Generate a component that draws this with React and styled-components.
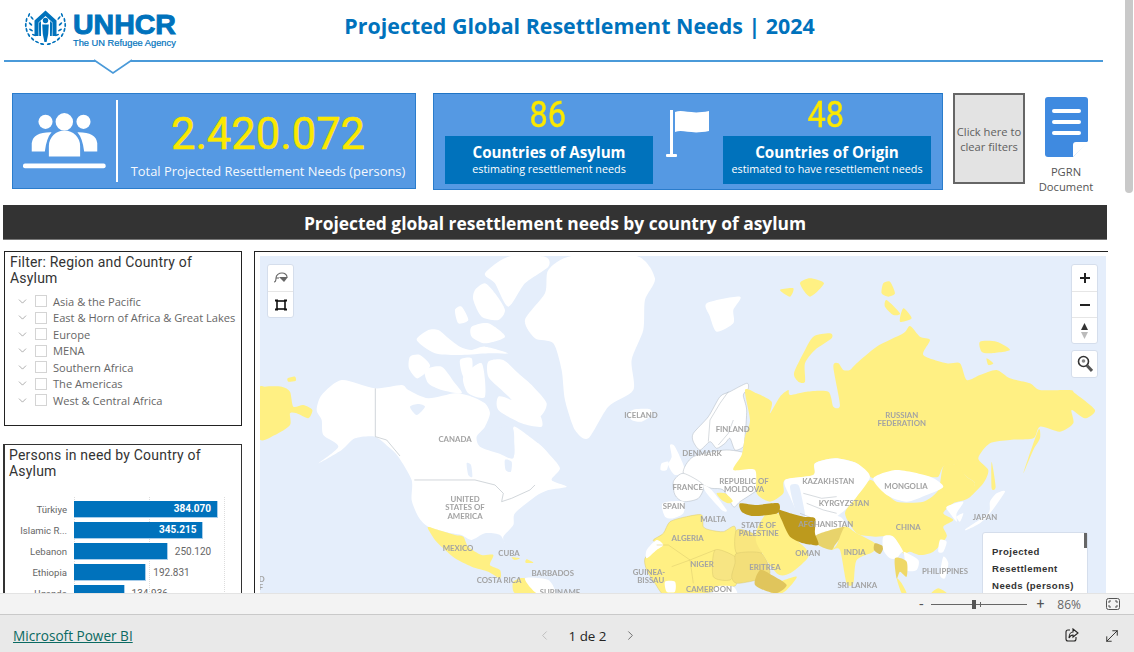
import React from 'react';
import styled, { createGlobalStyle } from 'styled-components';
import { ChevronDown, ChevronLeft, ChevronRight, MoveDiagonal } from 'lucide-react';

const GlobalStyle = createGlobalStyle`
  html, body { margin: 0; padding: 0; height: 100%; overflow: hidden; background: #fff; }
  * { box-sizing: border-box; }
`;

const regions = [
  'Asia & the Pacific',
  'East & Horn of Africa & Great Lakes',
  'Europe',
  'MENA',
  'Southern Africa',
  'The Americas',
  'West & Central Africa',
];

const bars = [
  { name: 'Türkiye', value: 384070, label: '384.070' },
  { name: 'Islamic R...', value: 345215, label: '345.215' },
  { name: 'Lebanon', value: 250120, label: '250.120' },
  { name: 'Ethiopia', value: 192831, label: '192.831' },
  { name: 'Uganda', value: 134936, label: '134.936' },
];

const mapLabels = [
  ['ICELAND', 641, 418], ['CANADA', 455, 441.5], ['UNITED', 465, 501.5], ['STATES OF', 465, 510], ['AMERICA', 465, 518.5],
  ['MEXICO', 458, 550.5], ['CUBA', 509, 556], ['BARBADOS', 552.7, 576], ['COSTA RICA', 499, 583], ['GUINEA-', 649, 574.5],
  ['BISSAU', 650.7, 582.5], ['SURINAME', 560, 595], ['ALGERIA', 687.7, 540.5], ['SPAIN', 674, 508.5], ['FRANCE', 687.7, 490],
  ['MALTA', 713, 521.5], ['NIGER', 702, 567], ['CAMEROON', 709, 592], ['ERITREA', 765, 569.5], ['STATE OF', 758.7, 527.5],
  ['PALESTINE', 758.7, 535.5], ['OMAN', 807.7, 556], ['INDIA', 854.7, 554.5], ['SRI LANKA', 857.3, 588], ['CHINA', 908.3, 529.5],
  ['JAPAN', 985, 519.5], ['PHILIPPINES', 945, 574], ['KAZAKHSTAN', 828.3, 484], ['MONGOLIA', 906, 489], ['KYRGYZSTAN', 844, 506],
  ['AFGHANISTAN', 825.7, 527], ['RUSSIAN', 901.7, 418], ['FEDERATION', 901.7, 426], ['FINLAND', 732.7, 432], ['DENMARK', 702, 456],
  ['REPUBLIC OF', 744, 484], ['MOLDOVA', 744, 492], ['D', 261.7, 582], ['F', 261, 590],
];

const Page = styled.div`
  width: 1134px;
  height: 652px;
  display: flex;
  flex-direction: column;
  overflow: hidden;
  background: #fff;
  font-family: "Roboto", "Liberation Sans", sans-serif;
`;

const Viewport = styled.div`
  position: relative;
  height: 593px;
  overflow: hidden;
  flex: none;
`;

const ScrollThumb = styled.div`
  position: absolute;
  top: 0;
  right: 1px;
  width: 8px;
  height: 193px;
  background: #c9c9c9;
  border-radius: 0 0 4px 4px;
`;

const Header = styled.header`
  position: relative;
  width: 1103px;
  height: 62px;
  margin-left: 4px;
  display: flex;
  align-items: flex-start;
  border-bottom: 2px solid #4a9ad9;
  width: 1099px;
`;

const Notch = styled.svg`
  position: absolute;
  left: 88px;
  top: 58px;
`;

const Logo = styled.div`
  flex: 0 0 174px;
  padding: 10px 0 0 20px;
  display: flex;
  gap: 6px;
  color: #0072bc;
`;

const LogoWords = styled.div`
  display: flex;
  flex-direction: column;
  font-family: "Liberation Sans", sans-serif;
`;

const LogoName = styled.div`
  font-size: 28.5px;
  font-weight: 700;
  line-height: 28px;
  height: 28px;
  -webkit-text-stroke: 1px #0072bc;
`;

const LogoTag = styled.div`
  font-size: 9.3px;
  line-height: 9px;
  margin-top: 1px;
  white-space: nowrap;
  -webkit-text-stroke: 0.2px #0072bc;
`;

const Title = styled.h1`
  flex: 0 0 803px;
  margin: 11px 0 0;
  text-align: center;
  color: #0072bc;
  font-family: "Open Sans", sans-serif;
  font-size: 21.4px;
  line-height: 30px;
  font-weight: 700;
  white-space: nowrap;
`;

const KpiRow = styled.section`
  display: flex;
  align-items: flex-start;
  padding-left: 12px;
  margin-top: 31px;
  height: 112px;
`;

const TotalCard = styled.div`
  flex: 0 0 404px;
  height: 96px;
  background: #5599e3;
  border: 1px solid #2a7ccc;
  display: flex;
  align-items: center;
  padding-left: 10px;
`;

const TotalIcon = styled.svg`
  flex: none;
`;

const TotalBody = styled.div`
  flex: 1;
  height: 82px;
  margin-left: 9px;
  border-left: 2px solid #fff;
  padding: 0 8px 0 11px;
  display: flex;
  flex-direction: column;
  align-items: center;
`;

const BigNumber = styled.div`
  font-size: 43.5px;
  line-height: 50px;
  margin-top: 10px;
  color: #fbe800;
  font-weight: 400;
  -webkit-text-stroke: 0.5px #fbe800;
`;

const TotalLabel = styled.div`
  font-family: "Open Sans", sans-serif;
  font-size: 12.9px;
  line-height: 18px;
  margin-top: 2px;
  color: #f4f8fd;
  white-space: nowrap;
`;

const CountCard = styled.div`
  flex: 0 0 510px;
  height: 97px;
  margin-left: 17px;
  background: #5599e3;
  border: 1px solid #2a7ccc;
  border-top-color: #1f74c5;
  display: grid;
  grid-template-columns: 208px 70px 208px;
  padding: 0 11px;
`;

const CountColumn = styled.div`
  display: flex;
  flex-direction: column;
  align-items: center;
`;

const CountNumber = styled.div`
  font-size: 37px;
  line-height: 42px;
  margin-right: 3px;
  color: #fbe800;
  transform: scaleX(0.88);
  -webkit-text-stroke: 0.4px #fbe800;
`;

const CountBox = styled.div`
  width: 100%;
  height: 48px;
  background: #0072bc;
  color: #fff;
  text-align: center;
  font-family: "Open Sans", sans-serif;
  padding-top: 7px;
`;

const CountTitle = styled.div`
  font-size: 15.2px;
  line-height: 18px;
  font-weight: 700;
`;

const CountSub = styled.div`
  font-size: 10.8px;
  line-height: 15px;
  white-space: nowrap;
`;

const FlagCell = styled.div`
  display: flex;
  justify-content: center;
  padding-top: 16px;
`;

const ClearButton = styled.button`
  flex: 0 0 72px;
  height: 91px;
  margin-left: 10px;
  padding: 0;
  background: #e3e3e3;
  border: 2px solid #666;
  color: #606060;
  font-family: "Open Sans", sans-serif;
  font-size: 11.2px;
  line-height: 15px;
`;

const DocLink = styled.div`
  flex: 0 0 60px;
  margin-left: 11px;
  display: flex;
  flex-direction: column;
  align-items: center;
  padding-top: 4px;
  color: #555;
  font-family: "Open Sans", sans-serif;
  font-size: 11.2px;
  line-height: 15px;
  text-align: center;
`;

const DocLabel = styled.div`
  margin-top: 7px;
`;

const Band = styled.h2`
  width: 1104px;
  height: 35px;
  margin: 0 0 0 3px;
  background: #333;
  border-bottom: 1px solid #777;
  color: #fff;
  text-align: center;
  font-family: "Open Sans", sans-serif;
  font-size: 17.4px;
  line-height: 36px;
  font-weight: 700;
`;

const Lower = styled.section`
  display: flex;
  align-items: flex-start;
  margin-top: 11px;
  padding-left: 3px;
`;

const SideColumn = styled.div`
  flex: 0 0 239px;
  min-width: 0;
  display: flex;
  flex-direction: column;
  gap: 18px;
`;

const FilterCard = styled.div`
  margin-left: 1px;
  height: 175px;
  border: 1px solid #222;
  padding: 2px 5px;
`;

const CardTitle = styled.div`
  color: #333;
  font-size: 14px;
  line-height: 16px;
  letter-spacing: 0.2px;
`;

const TreeList = styled.ul`
  list-style: none;
  margin: 7px 0 0;
  padding: 0 0 0 6px;
`;

const TreeRow = styled.li`
  display: flex;
  align-items: center;
  height: 16.5px;
  color: #666;
  font-family: "Open Sans", sans-serif;
  font-size: 11.1px;
  white-space: nowrap;
`;

const Box = styled.span`
  flex: none;
  width: 12px;
  height: 12px;
  margin: 0 6px 0 6px;
  border: 1px solid #d4d4d4;
`;

const ChartCard = styled.div`
  height: 200px;
  border: 1px solid #333;
  border-left-width: 2px;
  padding: 2px 4px;
`;

const ChartArea = styled.div`
  position: relative;
  margin-top: 18px;
  padding-top: 4px;
  display: flex;
  flex-direction: column;
  gap: 4px;
`;

const GridLine = styled.i`
  position: absolute;
  top: 0;
  bottom: 0;
  left: ${p => p.$left}px;
  border-left: 1px dotted #ddd;
`;

const BarRow = styled.div`
  position: relative;
  display: flex;
  align-items: center;
  height: 17px;
`;

const BarName = styled.div`
  flex: 0 0 58px;
  margin-right: 7px;
  text-align: right;
  color: #666;
  font-size: 9.6px;
  white-space: nowrap;
`;

const Bar = styled.div`
  height: 17px;
  background: #0072bc;
  border: 1px solid #a8cdea;
  border-width: 0 1px 1px 0;
  text-align: right;
  padding-right: 6px;
  color: #fff;
  font-size: 10px;
  line-height: 16px;
  font-weight: 700;
`;

const BarValue = styled.span`
  margin-left: 7px;
  color: #666;
  font-size: 10px;
`;

const MapFrame = styled.div`
  position: relative;
  flex: 0 0 853px;
  margin-left: 12px;
  height: 345px;
  padding: 4px 2px 0 5px;
  border-top: 1px solid #222;
  border-left: 1px solid #222;
`;

const MapSvg = styled.svg`
  display: block;
  width: 846px;
  height: 340px;
  background: #e5eefb;
  filter: blur(0.3px);
`;

const MapText = styled.text`
  font-family: "Lato", sans-serif;
  font-size: 7.8px;
  font-weight: 700;
  fill: #a3a3a3;
  text-anchor: middle;
`;

const Controls = styled.div`
  position: absolute;
  top: ${p => p.$top}px;
  ${p => (p.$right ? `right: ${p.$right}px;` : `left: ${p.$left}px;`)}
  width: 27px;
  background: #fff;
  border: 1px solid #d5deec;
  border-radius: 3px;
  display: flex;
  flex-direction: column;
`;

const ControlButton = styled.div`
  height: 26px;
  display: flex;
  align-items: center;
  justify-content: center;
  & + & { border-top: 1px solid #e6e6e6; }
`;

const Legend = styled.div`
  position: absolute;
  left: 727px;
  top: 280px;
  width: 106px;
  height: 70px;
  background: #fff;
  border: 1px solid #d5deec;
  border-radius: 3px 3px 0 0;
  padding: 10px 0 0 9px;
  color: #333;
  font-family: "Liberation Sans", sans-serif;
  font-size: 9.6px;
  line-height: 17px;
  font-weight: 700;
  letter-spacing: 0.45px;
`;

const LegendThumb = styled.div`
  position: absolute;
  top: 0;
  right: 0;
  width: 3px;
  height: 15px;
  background: #666;
`;

const StatusBar = styled.div`
  flex: none;
  height: 22px;
  background: #f3f3f3;
  border-top: 1px solid #e3e3e3;
  border-bottom: 1px solid #c9c9c9;
  display: flex;
  align-items: center;
  justify-content: flex-end;
  padding-right: 14px;
  color: #666;
`;

const ZoomSign = styled.span`
  font-size: ${p => p.$size}px;
  line-height: 20px;
  color: #555;
`;

const Slider = styled.div`
  position: relative;
  width: 96px;
  height: 1px;
  margin: 0 9px 0 8px;
  background: #666;
`;

const SliderThumb = styled.i`
  position: absolute;
  left: 41px;
  top: -4px;
  width: 4px;
  height: 9px;
  background: #555;
`;

const SliderTick = styled.i`
  position: absolute;
  left: 49px;
  top: -2px;
  width: 1px;
  height: 5px;
  background: #666;
`;

const ZoomValue = styled.span`
  margin: 0 25px 0 13px;
  font-family: "Open Sans", sans-serif;
  font-size: 12px;
`;

const Footer = styled.footer`
  flex: 1;
  background: #e9e9e9;
  display: grid;
  grid-template-columns: 1fr auto 1fr;
  align-items: center;
  padding: 4px 13px 0;
`;

const PowerLink = styled.a`
  color: #0b6a62;
  font-family: "Open Sans", sans-serif;
  font-size: 13.6px;
  text-decoration: underline;
`;

const Pager = styled.div`
  display: flex;
  align-items: center;
  gap: 17px;
  margin-left: 41px;
  color: #252423;
  font-family: "Open Sans", sans-serif;
  font-size: 13.4px;
  font-weight: 500;
`;

const FooterIcons = styled.div`
  display: flex;
  justify-content: flex-end;
  align-items: center;
  gap: 24px;
`;

const PeopleIcon = () => (
  <TotalIcon width="84" height="60" viewBox="70 335 250 168">
    <g fill="#fff">
      <circle cx="137" cy="362" r="21" />
      <circle cx="193" cy="362" r="26" />
      <circle cx="250" cy="362" r="21" />
      <path d="M96 450V425Q100 392 155 393Q140 410 135 450Z" />
      <path d="M291 450V425Q287 392 232 393Q247 410 252 450Z" />
      <path d="M147 465V434A46 46 0 0 1 240 434V465Z" />
      <rect x="70" y="486" width="246" height="14" rx="6" />
    </g>
  </TotalIcon>
);

const FlagIcon = () => (
  <svg width="44" height="47" viewBox="0 0 44 47">
    <g fill="#fff">
      <rect x="4" y="0" width="3" height="46" />
      <rect x="0" y="44" width="11" height="3" rx="1" />
      <path d="M9 2C18 -1 24 5 43 1V21C24 25 18 19 9 22Z" />
    </g>
  </svg>
);

const DocIcon = () => (
  <svg width="43" height="60" viewBox="0 0 43 60">
    <path d="M3 0H40Q43 0 43 3V44L28 60H3Q0 60 0 57V3Q0 0 3 0Z" fill="#3f8ae0" />
    <g fill="#fff">
      <rect x="7" y="12" width="29" height="4" rx="2" />
      <rect x="7" y="23" width="29" height="4" rx="2" />
      <rect x="7" y="34" width="29" height="4" rx="2" />
      <path d="M28 60V48Q28 45 31 45H43Z" />
    </g>
  </svg>
);

// laurel leaves: [x, y, angle] for the left branch, mirrored for the right
const leaves = [
  [5, 5, 20], [2.5, 10, 10], [1.8, 15, 0], [2.6, 20, -15], [4.8, 25, -30], [8.5, 29, -45], [13, 32, -65], [18, 34, -80],
  [8, 8, -40], [6.5, 14, -50], [7, 20, -60], [10, 25, -70],
];

const Emblem = () => (
  <svg width="43" height="36" viewBox="0 0 43 36">
    <g fill="#0072bc">
      <path d="M21.5 0.5L10.5 10.5V26H14.5V12.5L21.5 6L28.5 12.5V26H32.5V10.5Z" />
      <path d="M14.8 13L17 11V26H15.2ZM28.2 13L26 11V26H27.8Z" />
      <circle cx="21.5" cy="10.5" r="2.7" />
      <path d="M18.2 14.5H24.8L24.2 24L22.6 32H20.4L18.8 24Z" />
      {leaves.map(([x, y, a]) => (
        <g key={`${x}${y}`}>
          <ellipse cx={x} cy={y} rx="0.9" ry="2.2" transform={`rotate(${a} ${x} ${y})`} />
          <ellipse cx={43 - x} cy={y} rx="0.9" ry="2.2" transform={`rotate(${-a} ${43 - x} ${y})`} />
        </g>
      ))}
    </g>
  </svg>
);

// polygons are sketched point by point, this rounds them into coast lines
const smooth = d =>
  d.split(/(?=M)/).map(part => {
    const pts = [];
    let x = 0;
    let y = 0;
    part.replace(/([MLHV])([-\d. ]+)/g, (_, c, a) => {
      const n = a.trim().split(/\s+/).map(Number);
      if (c === 'H') x = n[0];
      else if (c === 'V') y = n[0];
      else { x = n[0]; y = n[1]; }
      pts.push([x, y]);
      return '';
    });
    const at = i => pts[(i + pts.length) % pts.length];
    let out = `M${pts[0][0]} ${pts[0][1]}`;
    pts.forEach((p, i) => {
      const [p0, p2, p3] = [at(i - 1), at(i + 1), at(i + 2)];
      const c1 = [p[0] + (p2[0] - p0[0]) / 8, p[1] + (p2[1] - p0[1]) / 8];
      const c2 = [p2[0] - (p3[0] - p[0]) / 8, p2[1] - (p3[1] - p[1]) / 8];
      out += `C${c1[0]} ${c1[1]} ${c2[0]} ${c2[1]} ${p2[0]} ${p2[1]}`;
    });
    return `${out}Z`;
  }).join('');

const Land = ({ d, fill = '#fff', line = 'none' }) => (
  <path d={smooth(d)} fill={fill} stroke={line} strokeWidth="1.4" strokeLinejoin="round" />
);

const YELLOW = '#fff083';
const BORDER = '#d9c76c';
const GREY = '#a9b2ba';
const SEA = '#e5eefb';

const WorldMap = () => (
  <MapSvg viewBox="260 256 846 340" aria-label="Map">
    {/* americas and arctic, drawn at 3x from x 255 y 250 */}
    <g transform="translate(255 250) scale(0.3333)">
      <Land d="M810 210L870 130L880 60L950 18H1145L1200 85L1170 150L1165 240L1130 330L1135 420L1060 470L1000 565L960 540L930 450L920 360L895 280L840 265Z" />
      <Land d="M185 480L200 435L260 390L360 415L440 405L460 420L520 445L600 430L650 440L690 460L705 490L690 530L665 560L675 590L730 610L775 625L775 560L780 530L850 580L880 610L915 655L890 690L935 710L880 720L840 740L780 790L775 825L745 860L750 880L735 855L690 850L650 870L620 855L590 850L520 830L490 800L470 750L470 690L430 620L400 590L360 560L300 565L260 600L190 640L250 590L205 555L200 510Z" />
      <Land d="M465 320L495 315L525 345L510 370L485 385L462 355Z" />
      <Land d="M510 360L560 350L600 400L620 430L560 420L520 400Z" />
      <Land d="M615 330L650 325L650 370L625 380Z" />
      <Land d="M625 380L680 340L690 440L640 430Z" />
      <Land d="M700 335L745 330L790 370L835 410L875 460L855 500L800 500L770 450L740 420L700 380Z" />
      <Land d="M730 440L770 450L850 490L860 530L800 520L730 480Z" />
      <Land d="M485 270L520 240L550 240L575 260L615 290L650 300L690 290L760 310L700 310L620 315L540 310Z" />
      <Land d="M660 120L690 100L720 130L750 180L730 210L680 200L655 150Z" />
      <Land d="M690 70L760 20L870 20L880 50L810 100L760 170L720 100Z" />
      <Land d="M600 180L620 170L640 210L610 220Z" />
      <Land d="M650 230L700 220L750 260L690 280L650 260Z" />
      <Land d="M1120 490L1140 478L1185 478L1190 495L1160 515L1130 510Z" />
      <Land fill={SEA} d="M672 560L700 540L770 530L778 580L775 620L730 605L680 590Z" />
      <Land fill={SEA} d="M465 470L490 462L510 470L485 495Z" />
      <Land fill={SEA} d="M635 640L648 645L652 680L640 675ZM750 630L770 635L768 665L752 660Z" />
      <path d="M361 415V560L395 570L435 618" fill="none" stroke={GREY} strokeWidth="1.6" />
      <path d="M478 690H660L720 705L745 730L740 755L770 745L825 720L840 705" fill="none" stroke={GREY} strokeWidth="1.6" />
      <Land fill={YELLOW} d="M12 420L30 410L80 410L105 425L115 470L145 465L172 480L160 505L125 490L105 490L105 525L60 555L12 565Z" />
      <path d="M0 410H12V565H0Z" fill={YELLOW} />
      <Land fill={YELLOW} d="M98 385L120 380L122 392L100 395Z" />
      <Land fill={YELLOW} d="M518 832L550 840L600 855L625 860L640 890L680 915L715 915L705 945L735 960L735 985L700 965L650 950L600 925L565 895L540 870Z" />
      <Land fill={YELLOW} d="M770 922L795 925L780 930ZM815 928L835 938L812 938ZM780 1030L775 995L810 985L845 1030Z" />
      <Land d="M810 985L880 990L900 1030L845 1030Z" />
    </g>
    {/* europe, 3x from x 650 y 370 */}
    <g transform="translate(650 370) scale(0.3333)">
      <Land line={GREY} d="M130 190L175 140L210 80L240 65L290 40L295 55L280 75L290 120L285 200L280 230L255 240L240 205L225 220L200 235L180 215L150 240L130 215Z" />
      <Land d="M60 225L75 230L105 300L75 315L55 285L65 260ZM35 280L55 275L50 300L32 300Z" />
      <path d="M175 215L180 150L210 100L235 65M250 150L235 190L205 225" fill="none" stroke={GREY} strokeWidth="1.4" />
    </g>
    {/* europe mainland, africa, 3x from x 640 y 470 */}
    <g transform="translate(640 470) scale(0.3333)">
      <Land line={GREY} d="M130 10L160 -40L260 -60L340 -40L370 40L300 95L280 110L250 60L215 55L190 45Z" />
      <Land line={GREY} d="M100 35L130 10L190 45L175 85L130 95L105 75Z" />
      <Land d="M68 100L130 95L130 130L100 145L75 140ZM190 45L215 60L260 120L245 120L200 70Z" />
      <Land fill={YELLOW} d="M230 70L255 70L278 92L265 100L245 90Z" />
      <Land fill={YELLOW} line={BORDER} d="M40 210L70 190L90 155L140 140L185 135L190 170L210 180L250 185L285 170L290 245L290 340L270 350L240 360L140 378L75 378L45 340L20 300L15 265L50 225Z" />
      <Land d="M20 240L50 210L70 225L50 240L20 265Z" />
      <path d="M85 225L150 270L225 240M95 290L150 270M150 270L160 340M225 240L220 320M50 225L85 225" fill="none" stroke={BORDER} strokeWidth="1.4" />
      <Land fill="#f7e583" line={BORDER} d="M225 240L285 260L290 295L270 330L220 320Z" />
      <Land fill="#f9e67f" line={BORDER} d="M290 180L345 195L365 250L290 250Z" />
      <Land fill="#f3df7a" line={BORDER} d="M290 250L365 250L390 310L350 330L290 340L275 320L285 280Z" />
      <Land fill={YELLOW} d="M400 345L470 320L440 360L410 378L395 378Z" />
      <Land fill="#e0c55c" d="M360 300L395 315L440 345L405 370L345 345Z" />
      <Land d="M75 335L105 335L105 365L80 365ZM225 350L280 350L290 378L225 378Z" />
      <Land fill={YELLOW} d="M350 190L380 130L420 135L440 190L500 240L470 290L420 310L380 270Z" />
      <Land fill="#bd9a1d" d="M300 100L350 105L415 100L412 130L340 138L305 125Z" />
    </g>
    {/* russia and asia, 3x from x 690 y 250 */}
    <g transform="translate(690 250) scale(0.3333)">
      <Land d="M50 160L150 140L130 180L130 220L80 245L60 200Z" />
      <Land fill={YELLOW} d="M312 370L340 310L370 260L420 250L425 265L375 300L345 340L345 395L325 395Z" />
      <Land fill={YELLOW} d="M580 100L600 95L615 130L595 140L575 130ZM590 150L630 190L610 195L585 170ZM640 175L665 205L630 215Z" />
      <Land fill={YELLOW} d="M270 120L310 115L300 140ZM330 100L360 85L402 100L360 140Z" />
      <Land fill={YELLOW} d="M870 275L920 275L960 300L900 310L875 305ZM890 325L910 340L895 345Z" />
      <Land fill={YELLOW} d="M165 420L200 430L245 455L240 490L270 440L295 420L300 435L350 425L415 425L430 470L450 465L430 350L445 340L460 360L480 360L500 340L560 290L640 250L660 228L690 260L720 270L700 315L770 340L810 340L830 390L870 375L920 360L960 385L1020 400L1050 420L1140 420L1155 430L1215 480L1185 505L1145 480L1150 520L1110 545L1050 530L1030 565L960 570L900 580L865 625L895 660L880 700L835 745L855 700L830 680L795 645L760 650L745 680L720 680L650 670L620 660L550 685L500 640L435 625L375 640L370 675L285 690L280 730L240 755L200 730L195 660L130 660L155 615L165 560L180 510Z" />
      <Land fill={YELLOW} d="M1000 670L1045 540L1050 565L1030 600ZM905 635L917 710L905 715Z" />
      <Land fill={YELLOW} d="M540 690L580 720L620 755L700 755L745 720L760 650L800 645L830 680L855 700L835 745L790 760L760 790L790 810L760 830L770 860L730 905L690 915L660 905L640 910L610 860L555 860L500 850L465 790L500 740Z" />
      <Land d="M550 685L620 660L720 680L760 710L710 735L650 755L590 735Z" />
      <Land d="M285 690L370 675L375 640L435 625L500 640L540 680L500 740L465 780L440 800L380 855L330 800L300 740Z" />
      <Land fill={SEA} d="M300 710L325 705L335 740L345 800L320 790Z" />
      <path d="M340 730L395 745L440 740M350 760L400 780L440 790M330 790L380 810" fill="none" stroke={GREY} strokeWidth="1.4" />
      <Land d="M380 790L450 800L465 830L405 855L385 850Z" />
      <Land fill={YELLOW} d="M205 830L260 800L330 880L355 920L300 970L260 970L200 880Z" />
      <Land fill="#e8d36b" d="M380 855L460 830L465 845L435 885L425 900L385 885Z" />
      <Land fill="#bd9a1d" d="M265 780L300 790L340 800L375 805L375 850L385 885L340 880L300 860L275 810Z" />
      <Land fill={YELLOW} d="M465 830L500 850L555 880L550 905L500 930L490 1000L470 1000L450 900L425 900L440 885Z" />
      <Land fill="#d9c05a" d="M555 880L580 890L570 912L552 900Z" />
      <Land d="M580 860L610 860L640 905L650 960L680 960L685 930L640 905L620 925L600 925L580 900Z" />
      <Land fill="#efd867" d="M615 925L650 935L650 980L630 965L620 985Z" />
      <Land fill={YELLOW} d="M620 985L635 1030L650 1030L635 1000Z" />
      <Land d="M800 800L820 790L810 815ZM830 835L895 790L900 755L920 730L945 725L900 790L870 820L830 840ZM770 770L820 755L800 790L800 815L780 790Z" />
      <Land d="M750 870L770 875L760 905L745 905Z" />
      <Land d="M760 920L775 940L765 985L750 975Z" />
      <Land fill={YELLOW} d="M725 1030L745 1015L770 1030Z" />
    </g>
    {mapLabels.map(([text, x, y]) => (
      <MapText key={`${text}${x}`} x={x} y={y}>{text}</MapText>
    ))}
  </MapSvg>
);

const App = () => (
  <Page>
    <GlobalStyle />
    <Viewport>
      <Header>
        <Logo>
          <Emblem />
          <LogoWords>
            <LogoName>UNHCR</LogoName>
            <LogoTag>The UN Refugee Agency</LogoTag>
          </LogoWords>
        </Logo>
        <Title>Projected Global Resettlement Needs | 2024</Title>
        <Notch width="42" height="18" viewBox="0 0 42 18">
          <path d="M2 2L21 15L40 2" fill="#fff" stroke="#4a9ad9" strokeWidth="1.6" />
        </Notch>
      </Header>

      <KpiRow>
        <TotalCard>
          <PeopleIcon />
          <TotalBody>
            <BigNumber>2.420.072</BigNumber>
            <TotalLabel>Total Projected Resettlement Needs (persons)</TotalLabel>
          </TotalBody>
        </TotalCard>
        <CountCard>
          <CountColumn>
            <CountNumber>86</CountNumber>
            <CountBox>
              <CountTitle>Countries of Asylum</CountTitle>
              <CountSub>estimating resettlement needs</CountSub>
            </CountBox>
          </CountColumn>
          <FlagCell><FlagIcon /></FlagCell>
          <CountColumn>
            <CountNumber>48</CountNumber>
            <CountBox>
              <CountTitle>Countries of Origin</CountTitle>
              <CountSub>estimated to have resettlement needs</CountSub>
            </CountBox>
          </CountColumn>
        </CountCard>
        <ClearButton>Click here to clear filters</ClearButton>
        <DocLink>
          <DocIcon />
          <DocLabel>PGRN<br />Document</DocLabel>
        </DocLink>
      </KpiRow>

      <Band>Projected global resettlement needs by country of asylum</Band>

      <Lower>
        <SideColumn>
          <FilterCard>
            <CardTitle>Filter: Region and Country of Asylum</CardTitle>
            <TreeList>
              {regions.map(region => (
                <TreeRow key={region}>
                  <ChevronDown size={13} color="#777" strokeWidth={1.1} />
                  <Box />
                  {region}
                </TreeRow>
              ))}
            </TreeList>
          </FilterCard>
          <ChartCard>
            <CardTitle>Persons in need by Country of Asylum</CardTitle>
            <ChartArea>
              <GridLine $left={65} />
              <GridLine $left={140} />
              <GridLine $left={215} />
              {bars.map((bar, i) => (
                <BarRow key={bar.name}>
                  <BarName>{bar.name}</BarName>
                  <Bar style={{ width: `${(bar.value / 384070) * 144}px` }}>{i < 2 ? bar.label : ''}</Bar>
                  {i >= 2 && <BarValue>{bar.label}</BarValue>}
                </BarRow>
              ))}
            </ChartArea>
          </ChartCard>
        </SideColumn>

        <MapFrame>
          <WorldMap />
          <Controls $top={12} $left={12}>
            <ControlButton>
              <svg width="16" height="14" viewBox="0 0 16 14" fill="none" stroke="#666" strokeWidth="1.1">
                <path d="M1 11C2 11 3 10 3 7C3 4 6 2 9 2C12 2 14 4 14 6" />
                <path d="M6 6H15L11 11Z" fill="#666" stroke="none" />
                <path d="M3 7H6" />
              </svg>
            </ControlButton>
            <ControlButton>
              <svg width="12" height="12" viewBox="0 0 12 12" fill="none" stroke="#111" strokeWidth="1.6">
                <rect x="2" y="2" width="8" height="8" />
                <path d="M0 1.5H3M9 1.5H12M0 10.5H3M9 10.5H12" strokeWidth="2.2" />
              </svg>
            </ControlButton>
          </Controls>
          <Controls $top={12} $right={10}>
            <ControlButton>
              <svg width="12" height="12" viewBox="0 0 12 12"><path d="M5 1H7V5H11V7H7V11H5V7H1V5H5Z" fill="#222" /></svg>
            </ControlButton>
            <ControlButton>
              <svg width="12" height="12" viewBox="0 0 12 12"><rect x="1" y="5" width="10" height="2" fill="#222" /></svg>
            </ControlButton>
            <ControlButton>
              <svg width="9" height="18" viewBox="0 0 9 18">
                <path d="M4.5 1L8 8H1Z" fill="#333" />
                <path d="M4.5 17L8 10H1Z" fill="#bbb" />
              </svg>
            </ControlButton>
          </Controls>
          <Controls $top={98} $right={10}>
            <ControlButton>
              <svg width="16" height="18" viewBox="0 0 16 18" fill="none">
                <circle cx="6.5" cy="6.5" r="5" stroke="#333" strokeWidth="1.6" />
                <circle cx="6.5" cy="6" r="1.8" fill="#888" />
                <path d="M10 10.5L15 16" stroke="#555" strokeWidth="3" />
              </svg>
            </ControlButton>
          </Controls>
          <Legend>
            Projected<br />Resettlement<br />Needs (persons)
            <LegendThumb />
          </Legend>
        </MapFrame>
      </Lower>
      <ScrollThumb />
    </Viewport>

    <StatusBar>
      <ZoomSign $size={15}>-</ZoomSign>
      <Slider><SliderThumb /><SliderTick /></Slider>
      <ZoomSign $size={14}>+</ZoomSign>
      <ZoomValue>86%</ZoomValue>
      <svg width="14" height="12" viewBox="0 0 14 12" fill="none" stroke="#555">
        <rect x="0.5" y="0.5" width="13" height="11" rx="2" />
        <path d="M3 5V3H5M9 3H11V5M11 7V9H9M5 9H3V7" />
      </svg>
    </StatusBar>

    <Footer>
      <PowerLink>Microsoft Power BI</PowerLink>
      <Pager>
        <ChevronLeft size={15} color="#b5b5b5" strokeWidth={1.3} />
        <span>1 de 2</span>
        <ChevronRight size={15} color="#555" strokeWidth={1.3} />
      </Pager>
      <FooterIcons>
        <svg width="14" height="15" viewBox="0 0 14 15" fill="none" stroke="#252423" strokeWidth="1.1">
          <path d="M5 2H3Q1 2 1 4V11Q1 13 3 13H9Q11 13 11 11V9" />
          <path d="M8 1L13 5L8 9V7C6 7 5 8 4 10C4 6 6 4 8 4Z" />
        </svg>
        <MoveDiagonal size={18} color="#252423" strokeWidth={1.2} />
      </FooterIcons>
    </Footer>
  </Page>
);

export default App;
